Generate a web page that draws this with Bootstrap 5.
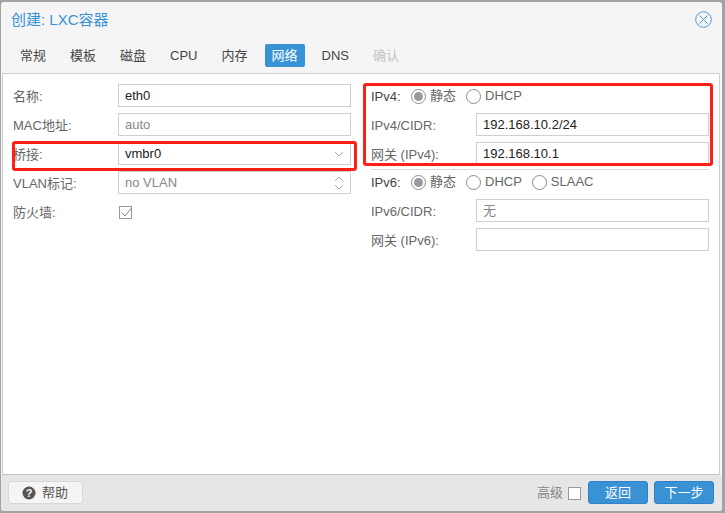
<!DOCTYPE html>
<html lang="zh"><head><meta charset="utf-8">
<link href="https://cdn.jsdelivr.net/npm/bootstrap@5.3.0/dist/css/bootstrap.min.css" rel="stylesheet">
<style>
html,body{height:513px;overflow:hidden}
body{background:#a3a3a3;font-family:"Liberation Sans","Noto Sans CJK SC",sans-serif;font-size:13px;color:#666;padding:2px 3px 2px 1px}
.pve-win{position:relative;height:509px;background:#f5f5f5;border-radius:3px;display:flex;flex-direction:column;overflow:hidden}
.pve-title{height:36px;padding:7px 10px 0;font-size:15px;line-height:22px;color:#3892d4;flex:none;justify-content:space-between}
.pve-x{margin-top:2px;margin-right:0}
.pve-tabs{height:35px;flex:none;padding:6px 10px 0 12px;gap:10px;align-items:flex-start}
.pve-tab{padding:0 7px;height:23px;line-height:23px;font-size:13px;color:#444;border-radius:2px}
.pve-tab.on{background:#3892d4;color:#fff}
.pve-tab.off{color:#c4c4c4}
.pve-panel{flex:1 1 auto;background:#fff;border:1px solid #cfcfcf;border-bottom-color:#c4c4c4;margin:0 2px 0 1px;padding:10px 10px 0 10px;gap:20px}
.pve-col-l,.pve-col-r{width:338px;flex:none}
.pve-row{height:23px;margin-bottom:6px;align-items:center}
.pve-lbl{width:105px;flex:none;color:#666;padding-top:2px}
.pve-lbl.dark{color:#444}
.pve-inp{flex:1 1 auto;height:23px;border:1px solid #cfcfcf;padding:1px 6px 0;color:#222;background:#fff;display:flex;align-items:center;justify-content:space-between;min-width:0}
.pve-inp.ph{color:#888}
.pve-sep{background:#dcdcd6;margin:-2px 0 0;height:1px}
.pve-radios{gap:10px;align-items:center;margin-left:-65px;padding-top:1px}
.pve-radio{display:inline-flex;align-items:center;gap:4px;color:#666}
.pve-dot{width:15px;height:15px;border:1px solid #8c8c8c;border-radius:50%;display:inline-block;position:relative;background:#fff}
.pve-dot.on:after{content:"";width:9px;height:9px;background:#999;border-radius:50%;position:absolute;left:2px;top:2px}
.pve-check{margin:3px 0 0 1px}
.pve-foot{height:36px;flex:none;background:#e6e6e6;padding:6px 8px 0 7px;justify-content:space-between;align-items:flex-start}
.pve-help{height:23px;width:75px;border:1px solid #d8d8d8;border-radius:3px;background:#f5f5f5;color:#555;gap:6px;padding:0 0 0 13px;align-items:center}
.pve-pri{height:23px;width:60px;background:#3892d4;border:1px solid #2f83c4;border-radius:3px;color:#fff;text-align:center;line-height:21px}
.pve-btns{gap:6px}
.pve-adv{color:#888;gap:5px;align-items:center;height:23px;margin-right:1px}
.pve-adv span{padding-top:1px}
.pve-box{width:13px;height:13px;border:1px solid #999;background:#fff;display:inline-block;margin-top:2px}
.pve-mark{position:absolute;border:3px solid #ff2015;border-radius:3px;pointer-events:none}
</style></head><body>
<div class="pve-win">
  <div class="pve-title d-flex"><span>创建: LXC容器</span>
    <svg width="17" height="17" viewBox="0 0 17 17" class="pve-x"><circle cx="8.5" cy="8.5" r="7.8" fill="none" stroke="#4a9bd8"/><path d="M4.5 4.5l8 8M12.5 4.5l-8 8" stroke="#4a9bd8" fill="none"/></svg>
  </div>
  <div class="pve-tabs d-flex">
    <span class="pve-tab">常规</span><span class="pve-tab">模板</span><span class="pve-tab">磁盘</span><span class="pve-tab">CPU</span><span class="pve-tab">内存</span><span class="pve-tab on">网络</span><span class="pve-tab">DNS</span><span class="pve-tab off">确认</span>
  </div>
  <div class="pve-panel d-flex">
    <div class="pve-col-l">
      <div class="pve-row d-flex"><span class="pve-lbl">名称:</span><div class="pve-inp">eth0</div></div>
      <div class="pve-row d-flex"><span class="pve-lbl">MAC地址:</span><div class="pve-inp ph">auto</div></div>
      <div class="pve-row d-flex"><span class="pve-lbl">桥接:</span><div class="pve-inp">vmbr0<svg width="12" height="8" viewBox="0 0 12 8"><path d="M3 2l4 4 4-4" fill="none" stroke="#aaa"/></svg></div></div>
      <div class="pve-row d-flex"><span class="pve-lbl">VLAN标记:</span><div class="pve-inp ph">no VLAN<svg width="12" height="18" viewBox="0 0 12 18"><path d="M3 7l4-4 4 4M3 11l4 4 4-4" fill="none" stroke="#aaa"/></svg></div></div>
      <div class="pve-row d-flex"><span class="pve-lbl">防火墙:</span><svg class="pve-check" width="14" height="14" viewBox="0 0 14 14"><rect x=".5" y=".5" width="12" height="12" fill="#fff" stroke="#999"/><path d="M2.5 6.5l3.5 3.5 6.5-8" fill="none" stroke="#888"/></svg></div>
    </div>
    <div class="pve-col-r">
      <div class="pve-row d-flex"><span class="pve-lbl dark">IPv4:</span><div class="pve-radios d-flex"><span class="pve-radio"><i class="pve-dot on"></i>静态</span><span class="pve-radio"><i class="pve-dot"></i>DHCP</span></div></div>
      <div class="pve-row d-flex"><span class="pve-lbl">IPv4/CIDR:</span><div class="pve-inp">192.168.10.2/24</div></div>
      <div class="pve-row d-flex"><span class="pve-lbl">网关 (IPv4):</span><div class="pve-inp">192.168.10.1</div></div>
      <div class="pve-sep"></div>
      <div class="pve-row d-flex"><span class="pve-lbl dark">IPv6:</span><div class="pve-radios d-flex"><span class="pve-radio"><i class="pve-dot on"></i>静态</span><span class="pve-radio"><i class="pve-dot"></i>DHCP</span><span class="pve-radio"><i class="pve-dot"></i>SLAAC</span></div></div>
      <div class="pve-row d-flex"><span class="pve-lbl">IPv6/CIDR:</span><div class="pve-inp ph">无</div></div>
      <div class="pve-row d-flex"><span class="pve-lbl">网关 (IPv6):</span><div class="pve-inp"></div></div>
    </div>
  </div>
  <div class="pve-foot d-flex">
    <div class="pve-help d-flex"><svg width="14" height="14" viewBox="0 0 14 14"><circle cx="7" cy="7" r="6.5" fill="#555"/><text x="7" y="11" text-anchor="middle" font-size="11" font-weight="700" fill="#f5f5f5" font-family="Liberation Sans">?</text></svg><span>帮助</span></div>
    <div class="pve-btns d-flex"><div class="pve-adv d-flex"><span>高级</span><i class="pve-box"></i></div><div class="pve-pri">返回</div><div class="pve-pri">下一步</div></div>
  </div>
  <div class="pve-mark" style="left:11px;top:139px;width:345px;height:30px"></div>
  <div class="pve-mark" style="left:362px;top:81px;width:350px;height:83px"></div>
</div>
<script src="https://cdn.jsdelivr.net/npm/bootstrap@5.3.0/dist/js/bootstrap.bundle.min.js"></script>
</body></html>
